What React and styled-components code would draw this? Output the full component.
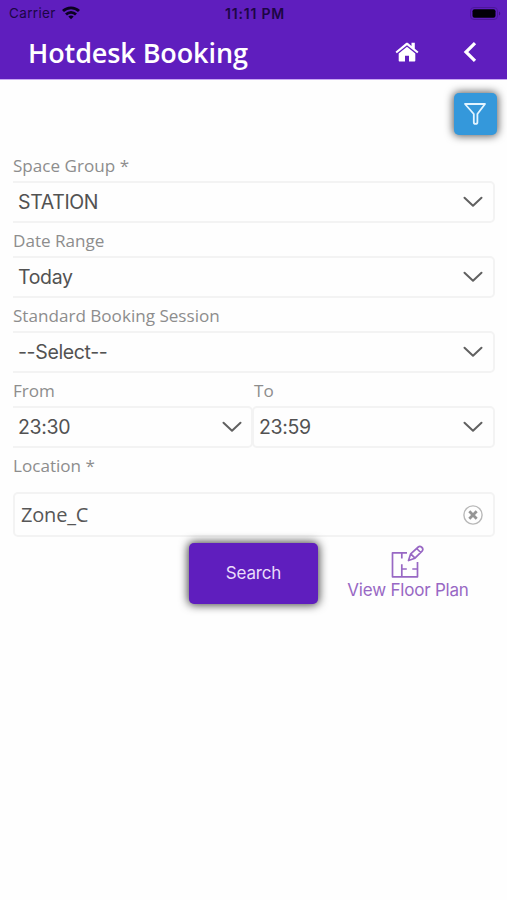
import React from 'react';
import styled, { createGlobalStyle } from 'styled-components';

const GlobalStyle = createGlobalStyle`
  * { box-sizing: border-box; }
  body { margin: 0; background: #fff; }
  button { font: inherit; border: 0; padding: 0; background: none; }
`;

const purple = '#5f1ebe';
const ui = "Inter, 'Liberation Sans', sans-serif";
const humanist = "'Open Sans', 'Noto Sans', sans-serif";

const Screen = styled.div`
  width: 507px;
  height: 900px;
  overflow: hidden;
  background: #fefefe;
`;

const Header = styled.header`
  height: 80px;
  background: ${purple};
  border-bottom: 1px solid #c9a8f2;
`;

const StatusBar = styled.div`
  display: grid;
  grid-template-columns: 1fr auto 1fr;
  align-items: center;
  height: 27px;
  padding: 0 6px 0 9px;
  font: 400 13.5px/27px ${ui};
  color: #1c0645;
`;

const Carrier = styled.div`
  display: flex;
  align-items: center;
  gap: 6px;
  letter-spacing: 0.35px;
  svg { display: block; margin-top: -2px; }
`;

const Clock = styled.div`
  font-weight: 600;
  font-size: 14px;
  letter-spacing: 0.8px;
`;

const Battery = styled.svg`
  justify-self: end;
`;

const TitleBar = styled.div`
  display: flex;
  align-items: center;
  height: 51px;
  padding: 0 30px 0 28px;
`;

const Title = styled.h1`
  flex: 1;
  margin: 0;
  font: 600 27px/51px ${humanist};
  letter-spacing: -0.1px;
  color: #fff;
`;

const NavButton = styled.button`
  display: flex;
  margin-left: ${(p) => p.$gap || 0}px;
  padding-bottom: 1px;
  color: #fff;
`;

const Content = styled.main`
  padding: 13px 12px 0 13px;
`;

const Toolbar = styled.div`
  display: flex;
  justify-content: flex-end;
  margin-right: -2px;
`;

const FilterButton = styled.button`
  display: flex;
  align-items: center;
  justify-content: center;
  width: 43px;
  height: 42px;
  padding: 0 1px 1px 0;
  border-radius: 5px;
  background: #3498db;
  box-shadow: 0 0 9px 1px rgba(0, 0, 0, 0.65);
`;

const Form = styled.form`
  margin-top: 14px;
`;

const Row = styled.div`
  display: grid;
  grid-template-columns: ${(p) => p.$columns || '1fr'};
`;

const Label = styled.label`
  display: block;
  height: 32px;
  font: 400 17.1px/34px ${humanist};
  color: #8d8d8d;
  white-space: nowrap;
`;

const Select = styled.div`
  display: flex;
  align-items: center;
  justify-content: space-between;
  height: 42px;
  margin-bottom: 1px;
  padding: 0 10px 0 5px;
  border: solid #f3f3f3;
  border-width: 2px 2px 2px 0;
  border-radius: 0 5px 5px 0;
  font: 400 19.5px/38px ${ui};
  letter-spacing: -0.35px;
  color: #525252;
`;

const StartSelect = styled(Select)`
  margin-right: 1px;
  padding-right: 9px;
`;

const EndSelect = styled(Select)`
  border-left-width: 2px;
  border-radius: 5px;
  margin-left: -2px;
`;

const Input = styled.div`
  display: flex;
  align-items: center;
  justify-content: space-between;
  height: 45px;
  margin-top: 11px;
  padding: 0 10px 0 6px;
  border: 2px solid #f3f3f3;
  border-radius: 5px;
  font: 400 20px/41px ${humanist};
  letter-spacing: -0.2px;
  color: #575757;
`;

const Actions = styled.div`
  display: grid;
  grid-template-columns: 176px 129px 1fr;
  margin-top: 6px;
`;

const SearchButton = styled.button`
  grid-column: 2;
  height: 61px;
  border-radius: 5px;
  background: ${purple};
  box-shadow: 0 0 10px 1px rgba(0, 0, 0, 0.75);
  font: 400 17px/59px ${ui};
  letter-spacing: -0.15px;
  color: #e9dcfa;
`;

const FloorPlan = styled.button`
  display: flex;
  flex-direction: column;
  align-items: center;
  padding: 2px 0 0 3px;
  font: 400 17px/22px ${ui};
  letter-spacing: -0.2px;
  color: #9868c4;
`;

const WifiIcon = () => (
  <svg width="18" height="14" viewBox="0 0 18 14" fill="none" stroke="#0b0220" strokeWidth="2.8">
    <path d="M1 5.1C5.4.7 12.6.7 17 5.1" />
    <path d="M4 8.4c2.8-2.8 7.2-2.8 10 0" />
    <path d="M9 13.3 6.3 10.6c1.5-1.5 3.9-1.5 5.4 0Z" fill="#0b0220" stroke="none" />
  </svg>
);

const HomeIcon = () => (
  <svg width="24" height="20" viewBox="0 0 24 20" fill="currentColor">
    <path d="M12 4.7 3.7 11.5v7c0 .6.4 1 1 1H10v-5.7h4v5.7h5.3c.6 0 1-.4 1-1v-7Z" />
    <path d="M.5 9.7 11 1.1c.6-.5 1.4-.5 2 0l3.5 2.9V.7h3.3v6l3.7 3-1.3 1.6L12 3.3 1.8 11.3Z" />
  </svg>
);

const BackIcon = () => (
  <svg width="14" height="20" viewBox="0 0 14 20" fill="none" stroke="currentColor" strokeWidth="3.2">
    <path d="m12 1.2-9 8.8 9 8.8" />
  </svg>
);

const FilterIcon = () => (
  <svg width="24" height="24" viewBox="0 0 24 24" fill="none" stroke="#e2f4ff" strokeWidth="1.8" strokeLinejoin="round">
    <path d="M2 2h20l-7.6 10v8.2c0 2.3-3.6 2.3-3.6 0V12Z" />
  </svg>
);

const Chevron = () => (
  <svg width="20" height="12" viewBox="0 0 20 12" fill="none" stroke="#606060" strokeWidth="2" strokeLinecap="round" strokeLinejoin="round">
    <path d="m1.5 1.8 8.5 8 8.5-8" />
  </svg>
);

const ClearIcon = () => (
  <svg width="20" height="20" viewBox="0 0 20 20" fill="none">
    <circle cx="10" cy="10" r="9.1" stroke="#b8b8b8" strokeWidth="1.4" />
    <path d="m6.3 6.3 7.4 7.4m0-7.4-7.4 7.4" stroke="#959595" strokeWidth="2.8" />
  </svg>
);

const PlanIcon = () => (
  <svg width="34" height="34" viewBox="0 0 34 34" fill="none" stroke="currentColor" strokeWidth="1.7" strokeLinejoin="round">
    <path d="M16 7.8H1.5v24h25V17" />
    <path d="M10.8 8v5.5m0 5.7v12.5m0-7.7h5m5.5 0h5" />
    <path d="m17.5 15.5 2.2-6.7L27.3 2c2-1.8 5.8 1.2 4 3.8L24 13.2Zm2.2-6.7 4.3 4.4M25.6 3.5l4.2 4" />
  </svg>
);

const fields = [
  { label: 'Space Group *', value: 'STATION' },
  { label: 'Date Range', value: 'Today' },
  { label: 'Standard Booking Session', value: '--Select--' },
];

export default function App() {
  return (
    <Screen>
      <GlobalStyle />
      <Header>
        <StatusBar>
          <Carrier>Carrier <WifiIcon /></Carrier>
          <Clock>11:11 PM</Clock>
          <Battery width="31" height="13" viewBox="0 0 31 13">
            <rect x=".5" y=".5" width="27" height="12" rx="3.5" fill="none" stroke="#4d179b" />
            <rect x="2.5" y="2.2" width="23" height="8.6" rx="2" fill="#030008" />
            <path d="M29 4.5c1.7.6 1.7 3.4 0 4Z" fill="#421285" />
          </Battery>
        </StatusBar>
        <TitleBar>
          <Title>Hotdesk Booking</Title>
          <NavButton aria-label="Home"><HomeIcon /></NavButton>
          <NavButton aria-label="Back" $gap={44}><BackIcon /></NavButton>
        </TitleBar>
      </Header>
      <Content>
        <Toolbar>
          <FilterButton aria-label="Filter"><FilterIcon /></FilterButton>
        </Toolbar>
        <Form>
          {fields.map((f) => (
            <Row key={f.label}>
              <Label>{f.label}</Label>
              <Select>{f.value}<Chevron /></Select>
            </Row>
          ))}
          <Row $columns="241px 1fr">
            <div>
              <Label>From</Label>
              <StartSelect>23:30<Chevron /></StartSelect>
            </div>
            <div>
              <Label>To</Label>
              <EndSelect>23:59<Chevron /></EndSelect>
            </div>
          </Row>
          <Label>Location *</Label>
          <Input>Zone_C<ClearIcon /></Input>
          <Actions>
            <SearchButton type="button">Search</SearchButton>
            <FloorPlan type="button"><PlanIcon />View Floor Plan</FloorPlan>
          </Actions>
        </Form>
      </Content>
    </Screen>
  );
}
